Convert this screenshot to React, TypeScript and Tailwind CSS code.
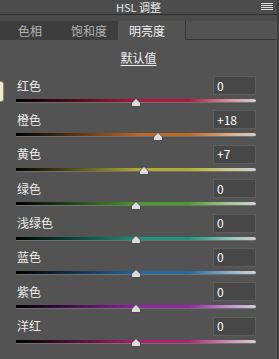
import React from "react";

type Row = {
  label: string;
  value: number;
  color: string;
  light: string;
};

const rows: Row[] = [
  { label: "红色", value: 0, color: "#b0183e", light: "#d89aa8" },
  { label: "橙色", value: 18, color: "#c06a22", light: "#d8b090" },
  { label: "黄色", value: 7, color: "#b4ac30", light: "#d0cc98" },
  { label: "绿色", value: 0, color: "#4c9c2c", light: "#a8cc98" },
  { label: "浅绿色", value: 0, color: "#1c947c", light: "#94c8bc" },
  { label: "蓝色", value: 0, color: "#2468a4", light: "#98b4cc" },
  { label: "紫色", value: 0, color: "#9424a8", light: "#c898d0" },
  { label: "洋红", value: 0, color: "#b02070", light: "#d098b8" },
];

function Thumb() {
  return (
    <svg width="10" height="9" viewBox="0 0 10 9" className="block">
      <polygon points="5,0.5 9.5,5 9.5,8.5 0.5,8.5 0.5,5" fill="#dcdcdc" stroke="#3a3a3a" strokeWidth="0.8" />
    </svg>
  );
}

function SliderRow({ row }: { row: Row }) {
  const pct = 50 + row.value / 2;
  const text = row.value > 0 ? `+${row.value}` : `${row.value}`;
  return (
    <div className="h-[34.4px] flex flex-col">
      <div className="flex items-center justify-between h-[19px] pl-[17px] pr-[21px]">
        <span className="text-[12px] leading-none text-[#ececec]">{row.label}</span>
        <div className="w-[43px] h-[19px] bg-[#474747] border border-[#5e5e5e] flex items-center pl-[3px] text-[12px] leading-none text-white">
          {text}
        </div>
      </div>
      <div className="relative ml-[16px] mr-[21px] mt-[4px] h-[4px]">
        <div
          className="h-[4px] rounded-r-sm border-b border-[#707070]"
          style={{
            background: `linear-gradient(to right, #000 0%, ${row.color} 52%, ${row.color} 72%, ${row.light} 90%, #d0d0d0 100%)`,
          }}
        />
        <div className="absolute top-[-1.5px] -translate-x-1/2" style={{ left: `${pct}%` }}>
          <Thumb />
        </div>
      </div>
    </div>
  );
}

export default function App() {
  return (
    <div className="w-[279px] h-[359px] bg-[#535353] relative overflow-hidden border-r-2 border-[#3e3e3e] font-['Noto_Sans_CJK_SC',sans-serif]">
      <div className="h-[15px] bg-[#4c4c4c] border-b border-[#303030] flex items-center justify-center relative">
        <span className="text-[11px] leading-none text-[#e8e8e8]">HSL 调整</span>
        <div className="absolute right-[4px] top-[3px] flex flex-col gap-[1px]">
          <div className="w-[12px] h-[1px] bg-[#e0e0e0]" />
          <div className="w-[12px] h-[1px] bg-[#e0e0e0]" />
          <div className="w-[12px] h-[1px] bg-[#e0e0e0]" />
          <div className="w-[12px] h-[1px] bg-[#e0e0e0]" />
        </div>
      </div>
      <div className="h-[25px] bg-[#4b4b4b] flex items-end">
        <div className="flex h-[19px] bg-[#3d3d3d]">
          <div className="w-[60px] flex items-center justify-center text-[12px] text-[#b4b4b4]">色相</div>
          <div className="w-[58px] flex items-center justify-center text-[12px] text-[#b4b4b4]">饱和度</div>
        </div>
        <div className="w-[58px] h-[19px] bg-[#535353] flex items-center justify-center text-[12px] text-[#f2f2f2]">明亮度</div>
        <div className="w-[9px] h-[19px] bg-[#535353]" />
        <div className="flex-1 h-[19px] bg-[#535353] border-l border-b border-[#353535]" />
      </div>
      <div className="h-[36px] flex items-center justify-center">
        <span className="text-[12px] leading-none text-[#f0f0f0] underline underline-offset-2">默认值</span>
      </div>
      <div className="flex flex-col">
        {rows.map((r) => (
          <SliderRow key={r.label} row={r} />
        ))}
      </div>
      <div className="absolute left-[-3px] top-[81px] w-[7px] h-[21px] rounded-[3px] bg-[#efebcf] border border-[#8a8668]" />
    </div>
  );
}
